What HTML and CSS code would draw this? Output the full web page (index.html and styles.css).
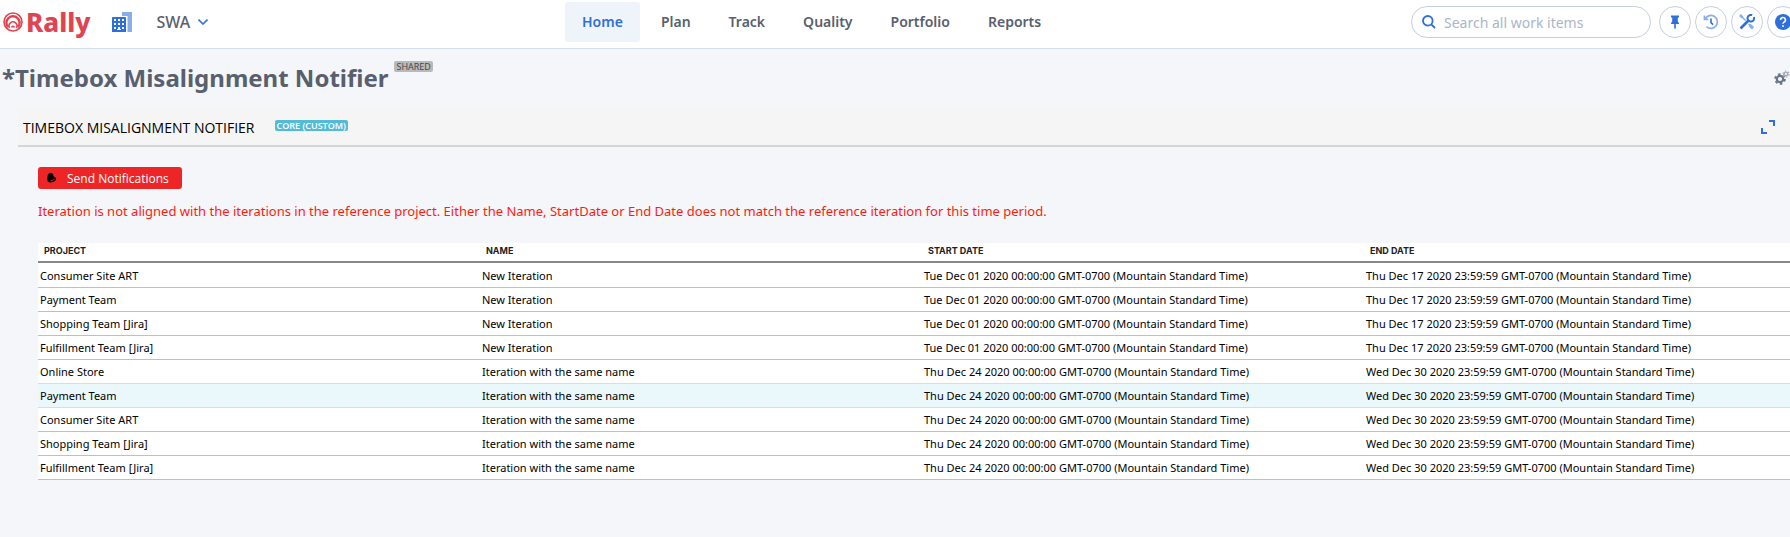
FILE: index.html
```
<!DOCTYPE html>
<html lang="en">
<head>
<meta charset="utf-8">
<title>Timebox Misalignment Notifier</title>
<link rel="stylesheet" href="styles.css">
</head>
<body>
<div class="shell">
  <header class="topbar">
    <div class="brand">
      <a class="logo" href="#">
        <svg class="logo-mark" viewBox="0 0 20 20" fill="none" stroke="#e04452">
          <circle cx="10" cy="10" r="9" stroke-width="1.6"/>
          <path d="M5 15.200A6.600 6.600 0 1 1 15 15.200" stroke-width="2.4"/>
          <path d="M6.600 16A4 4 0 1 1 13.400 16" stroke-width="1.6"/>
          <path d="M8 15.500A1.800 1.800 0 1 1 12 15.500Z" fill="#e04452" stroke="none"/>
        </svg>
        <span>Rally</span>
      </a>
      <button class="icon-plain" type="button" aria-label="Workspaces">
        <svg width="20" height="20" viewBox="0 0 20 20">
          <path d="M10 0H20V20H15.500V4H10Z" fill="#89aeea"/>
          <path d="M1 5H13Q14 5 14 6V20H9V17H5V20H0V6Q0 5 1 5Z" fill="#2e6fdb"/>
          <path d="M2 7h2v2H2zM6 7h2v2H6zM10 7h2v2h-2zM2 11h2v2H2zM6 11h2v2H6zM10 11h2v2h-2zM2 15h2v2H2zM6 15h2v2H6zM10 15h2v2h-2z" fill="#fff"/>
          <path d="M0 18H14V20H0Z" fill="#2e6fdb"/>
        </svg>
      </button>
      <button class="project" type="button">SWA
        <svg width="10" height="6" viewBox="0 0 10 6" fill="none" stroke="#2e6fdb" stroke-width="1.6"><path d="M.5.6 5 5 9.500.6"/></svg>
      </button>
    </div>
    <nav class="nav">
      <a class="active" href="#">Home</a>
      <a href="#">Plan</a>
      <a href="#">Track</a>
      <a href="#">Quality</a>
      <a href="#">Portfolio</a>
      <a href="#">Reports</a>
    </nav>
    <div class="tools">
      <label class="search">
        <svg width="14" height="14" viewBox="0 0 14 14" fill="none" stroke="#2e6fdb" stroke-width="1.8"><circle cx="5.800" cy="5.800" r="4.800"/><path d="M9.300 9.300 13 13"/></svg>
        <input type="search" placeholder="Search all work items" aria-label="Search all work items">
      </label>
      <button class="round" type="button" aria-label="Pin">
        <svg width="16" height="16" viewBox="0 0 16 16" fill="#2e6fdb"><path d="M4 1.500h8v2h-1.200v4Q12 8.300 12 10H8.800v4.500H7.200V10H4Q4 8.300 5.200 7.500v-4H4z"/></svg>
      </button>
      <button class="round" type="button" aria-label="Recent">
        <svg width="16" height="16" viewBox="0 0 16 16" fill="none"><path d="M2.200 4.800A6.500 6.500 0 1 1 3.500 12.700M1.400 1.500V5.400H5.300" stroke="#89aeea" stroke-width="1.600"/><path d="M8 4.500V8.600L10 10.600" stroke="#2e6fdb" stroke-width="1.600"/></svg>
      </button>
      <button class="round" type="button" aria-label="Setup">
        <svg width="16" height="16" viewBox="0 0 16 16" fill="none"><path d="M1.500 1.500 6.500 6.500M9.500 10 14 14.200" stroke="#89aeea" stroke-width="1.600"/><path d="M10.500 11 14 14.200" stroke="#89aeea" stroke-width="3.200"/><path d="M1 1 3.500 3.500" stroke="#89aeea" stroke-width="2.600"/><path d="M1.500 14.500 9.500 6.500" stroke="#2e6fdb" stroke-width="2.600"/><path d="M13.200 1.200A3.300 3.300 0 1 0 14.900 3" stroke="#2e6fdb" stroke-width="2"/><path d="M11.500 4.600 14.300 1.700" stroke="#fff" stroke-width="1.400"/></svg>
      </button>
      <button class="round" type="button" aria-label="Help">
        <svg width="16" height="16" viewBox="0 0 16 16"><circle cx="8" cy="8" r="8" fill="#2e6fdb"/><path d="M5.600 6A2.400 2.400 0 1 1 9 8.100Q8 8.600 8 9.700M8 11.300V13" fill="none" stroke="#fff" stroke-width="1.600"/></svg>
      </button>
    </div>
  </header>
  <main>
    <div class="page-head">
      <h1>*Timebox Misalignment Notifier</h1>
      <span class="tag shared">SHARED</span>
      <button class="icon-plain gear" type="button" aria-label="Page settings">
        <svg width="16" height="16" viewBox="0 0 16 16" fill="none"><circle cx="6" cy="9" r="3.200" stroke="#6b7684" stroke-width="2.200"/><circle cx="6" cy="9" r="4.900" stroke="#6b7684" stroke-width="1.800" stroke-dasharray="2.560 2.560"/><circle cx="12" cy="4" r="1.800" stroke="#a6adb8" stroke-width="1.400"/><circle cx="12" cy="4" r="3" stroke="#a6adb8" stroke-width="1.200" stroke-dasharray="1.570 1.570"/></svg>
      </button>
    </div>
    <section class="panel">
      <div class="panel-head">
        <h2>TIMEBOX MISALIGNMENT NOTIFIER</h2>
        <span class="tag custom">CORE (CUSTOM)</span>
        <button class="icon-plain expand" type="button" aria-label="Expand">
          <svg width="14" height="14" viewBox="0 0 14 14" fill="none" stroke="#2e6fdb" stroke-width="2"><path d="M8 1H13V6M1 8V13H6"/></svg>
        </button>
      </div>
      <div class="panel-body">
        <button class="send" type="button">
          <svg width="10" height="12" viewBox="0 0 10 12"><path d="M.8 9.800Q-.2 6 .8 3 1.500.8 4 .8 6.200 1.200 6.600 4 7.200 5.500 9.200 6L8.500 8.500Q6 10.800 3 10.500Z" fill="#000"/><path d="M3.500 8.600Q6.500 8.500 7.800 7" fill="none" stroke="#c22"/></svg>
          Send Notifications
        </button>
        <p class="message">Iteration is not aligned with the iterations in the reference project. Either the Name, StartDate or End Date does not match the reference iteration for this time period.</p>
        <table class="grid">
          <thead><tr><th>PROJECT</th><th>NAME</th><th>START DATE</th><th>END DATE</th></tr></thead>
          <tbody>
            <tr><td>Consumer Site ART</td><td>New Iteration</td><td>Tue Dec 01 2020 00:00:00 GMT-0700 (Mountain Standard Time)</td><td>Thu Dec 17 2020 23:59:59 GMT-0700 (Mountain Standard Time)</td></tr>
            <tr><td>Payment Team</td><td>New Iteration</td><td>Tue Dec 01 2020 00:00:00 GMT-0700 (Mountain Standard Time)</td><td>Thu Dec 17 2020 23:59:59 GMT-0700 (Mountain Standard Time)</td></tr>
            <tr><td>Shopping Team [Jira]</td><td>New Iteration</td><td>Tue Dec 01 2020 00:00:00 GMT-0700 (Mountain Standard Time)</td><td>Thu Dec 17 2020 23:59:59 GMT-0700 (Mountain Standard Time)</td></tr>
            <tr><td>Fulfillment Team [Jira]</td><td>New Iteration</td><td>Tue Dec 01 2020 00:00:00 GMT-0700 (Mountain Standard Time)</td><td>Thu Dec 17 2020 23:59:59 GMT-0700 (Mountain Standard Time)</td></tr>
            <tr class="before-hover"><td>Online Store</td><td>Iteration with the same name</td><td>Thu Dec 24 2020 00:00:00 GMT-0700 (Mountain Standard Time)</td><td>Wed Dec 30 2020 23:59:59 GMT-0700 (Mountain Standard Time)</td></tr>
            <tr class="hovered"><td>Payment Team</td><td>Iteration with the same name</td><td>Thu Dec 24 2020 00:00:00 GMT-0700 (Mountain Standard Time)</td><td>Wed Dec 30 2020 23:59:59 GMT-0700 (Mountain Standard Time)</td></tr>
            <tr><td>Consumer Site ART</td><td>Iteration with the same name</td><td>Thu Dec 24 2020 00:00:00 GMT-0700 (Mountain Standard Time)</td><td>Wed Dec 30 2020 23:59:59 GMT-0700 (Mountain Standard Time)</td></tr>
            <tr><td>Shopping Team [Jira]</td><td>Iteration with the same name</td><td>Thu Dec 24 2020 00:00:00 GMT-0700 (Mountain Standard Time)</td><td>Wed Dec 30 2020 23:59:59 GMT-0700 (Mountain Standard Time)</td></tr>
            <tr><td>Fulfillment Team [Jira]</td><td>Iteration with the same name</td><td>Thu Dec 24 2020 00:00:00 GMT-0700 (Mountain Standard Time)</td><td>Wed Dec 30 2020 23:59:59 GMT-0700 (Mountain Standard Time)</td></tr>
          </tbody>
        </table>
      </div>
    </section>
  </main>
</div>
</body>
</html>
```

FILE: styles.css
```
* { box-sizing: border-box; }
body { margin: 0; background: #f5f6fa; overflow-x: hidden; color: #000; font-family: "Noto Sans", "Open Sans", sans-serif; }
button, input { font-family: inherit; }
button { padding: 0; cursor: pointer; }
svg { display: block; flex: none; }
/* The workspace runs slightly past the right edge of the window. */
.shell { width: calc(100% + 16px); }
.topbar { display: flex; justify-content: space-between; align-items: flex-start; padding: 0 7px 4px 3px; background: #fff; border-bottom: 1px solid #d5dfeb; }
.brand { display: flex; align-items: center; height: 44px; padding-right: 4px; }
.logo { display: flex; align-items: center; gap: 3px; margin-right: 21px; color: #e04452; font-size: 26px; line-height: 32px; font-weight: 800; text-decoration: none; }
.logo-mark { width: 20px; height: 20px; }
.icon-plain { border: 0; background: none; }
.project { display: flex; align-items: center; gap: 8px; margin-left: 25px; border: 0; background: none; color: #58606e; font-size: 16px; font-weight: 500; }
.nav { display: flex; gap: 4px; padding-top: 2px; }
.nav a { padding: 10px 17px; border-radius: 3px; color: #58606e; font-size: 14px; line-height: 20px; font-weight: 600; text-decoration: none; }
.nav .active { background: #eff4fb; color: #2e6fdb; }
.tools { display: flex; gap: 4px; padding-top: 6px; }
.search { display: flex; align-items: center; gap: 8px; width: 240px; height: 32px; margin-right: 4px; padding: 0 10px; border: 1px solid #c5cfe0; border-radius: 16px; background: #fff; }
.search input { flex: 1; min-width: 0; padding: 0; border: 0; outline: 0; background: none; font-size: 14px; }
.search input::placeholder { color: #a9b6ca; opacity: 1; }
.round { display: grid; place-items: center; width: 32px; height: 32px; border: 1px solid #c5cfe0; border-radius: 50%; background: #fff; }
.page-head { display: flex; align-items: flex-start; padding: 12px 16px 12px 2px; }
h1 { margin: 0; color: #58606e; font-size: 24px; line-height: 34px; font-weight: 700; }
.tag { border-radius: 2px; font-family: "Open Sans", sans-serif; font-size: 9px; line-height: 11px; }
.shared { margin-left: 6px; padding: 0 2px; background: #b9b9b9; color: #444; }
.gear { margin: 9px 0 0 auto; }
.panel { margin-left: 18px; }
.panel-head { display: flex; align-items: flex-start; padding: 11px 31px 8px 5px; background: #f5f5f5; border-bottom: 2px solid #d5d5d5; }
h2 { margin: 0; font-family: "Open Sans", sans-serif; font-size: 14px; line-height: 19px; font-weight: 400; }
.custom { margin: 2px 0 0 20px; padding: 0 2px; background: #53bbd6; color: #fff; font-weight: 600; }
.expand { margin: 2px 0 0 auto; }
.panel-body { padding: 20px 0 57px 20px; }
.send { display: flex; align-items: center; gap: 10px; height: 22px; padding: 0 13px 0 9px; border: 0; border-radius: 3px; background: #ee2526; color: #fff; font-family: "Open Sans", sans-serif; font-size: 12px; font-weight: 500; }
.message { margin: 12px 0 22px; color: #fe1b0e; font-size: 13px; line-height: 20px; }
.grid { width: 100%; table-layout: fixed; border-collapse: separate; border-spacing: 0; background: #fff; }
th { height: 20px; padding: 0 6px 2px; border-bottom: 2px solid #888; text-align: left; color: #222; font-family: Inter, "Open Sans", sans-serif; font-size: 9px; line-height: 16px; font-weight: 700; }
td { height: 24px; padding: 2px 2px 1px; border-bottom: 1px solid #c0c0c0; font-size: 11px; line-height: 20px; }
tbody tr:first-child td { padding-top: 3px; }
.before-hover td, .hovered td { border-bottom-color: #d8dde0; }
.hovered td { background: #eaf7fb; }
```
